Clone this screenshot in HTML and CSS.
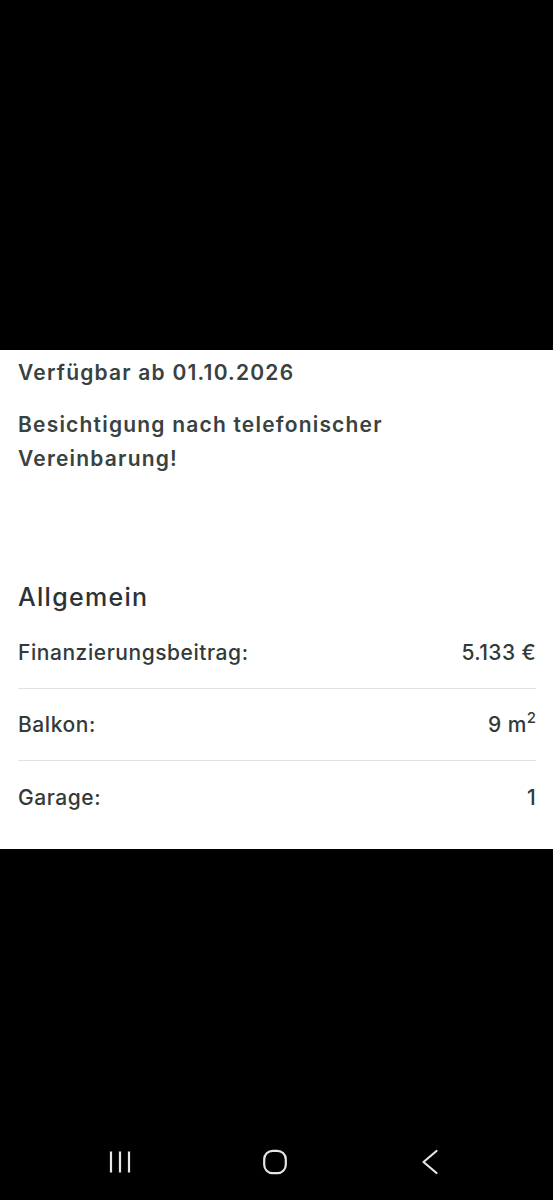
FILE: index.html
```html
<!DOCTYPE html>
<html lang="de">
<head>
<meta charset="utf-8">
<link rel="stylesheet" href="styles.css">
</head>
<body>
<div class="screen">
  <div class="top-black"></div>
  <main class="sheet">
    <p class="line first">Verfügbar ab 01.10.2026</p>
    <p class="line para">Besichtigung nach telefonischer<br>Vereinbarung!</p>
    <h2 class="heading">Allgemein</h2>
    <div class="rows">
      <div class="row"><span class="label">Finanzierungsbeitrag:</span><span class="value">5.133 €</span></div>
      <div class="row"><span class="label">Balkon:</span><span class="value">9 m<sup>2</sup></span></div>
      <div class="row last"><span class="label">Garage:</span><span class="value">1</span></div>
    </div>
  </main>
  <div class="bottom-black">
    <nav class="navbar">
      <svg class="nav-icon" width="24" height="24" viewBox="0 0 24 24"><path d="M3 1.5v21M12 1.5v21M21 1.5v21" stroke="#e6e6e6" stroke-width="2.2" fill="none"/></svg>
      <svg class="nav-icon" width="26" height="26" viewBox="0 0 26 26"><rect x="2.2" y="1.8" width="21.6" height="22.4" rx="8.5" stroke="#e6e6e6" stroke-width="2.2" fill="none"/></svg>
      <svg class="nav-icon" width="18" height="26" viewBox="0 0 18 26"><path d="M15.5 2L2.5 13l13 11" stroke="#e6e6e6" stroke-width="2.2" fill="none" stroke-linecap="round" stroke-linejoin="round"/></svg>
    </nav>
  </div>
</div>
</body>
</html>
```
FILE: styles.css
```css
html, body {
  margin: 0;
  padding: 0;
  background: #000;
}
.screen {
  width: 553px;
  height: 1200px;
  display: flex;
  flex-direction: column;
  font-family: Inter, Roboto, "Liberation Sans", sans-serif;
}
.top-black {
  height: 350px;
  background: #000;
}
.sheet {
  height: 499px;
  background: #fff;
  padding: 0 17px 0 18px;
  box-sizing: border-box;
  color: #384241;
}
.line {
  margin: 0;
  font-size: 21px;
  font-weight: 600;
  line-height: 34px;
  letter-spacing: 1.2px;
}
.first {
  padding-top: 6px;
}
.para {
  margin-top: 18px;
}
.heading {
  margin: 104px 0 0;
  font-size: 25px;
  font-weight: 500;
  line-height: 34px;
  letter-spacing: 1.3px;
  color: #2c3235;
}
.rows {
  margin-top: 3px;
}
.row {
  height: 72px;
  display: flex;
  justify-content: space-between;
  align-items: center;
  border-bottom: 1.5px solid #e2e2e2;
  font-size: 21px;
  font-weight: 500;
  letter-spacing: 0.55px;
  color: #323a3a;
  box-sizing: border-box;
}
.row.last {
  border-bottom: none;
}
.value {
  letter-spacing: 0.4px;
}
.value sup {
  font-size: 15px;
  line-height: 0;
  vertical-align: 9px;
  letter-spacing: 0;
}
.bottom-black {
  flex: 1;
  background: #000;
  display: flex;
  flex-direction: column;
  justify-content: flex-end;
}
.navbar {
  height: 76px;
  display: grid;
  grid-template-columns: repeat(3, 155px);
  justify-items: center;
  align-items: center;
  padding-left: 42px;
}
.nav-icon {
  display: block;
}
```
